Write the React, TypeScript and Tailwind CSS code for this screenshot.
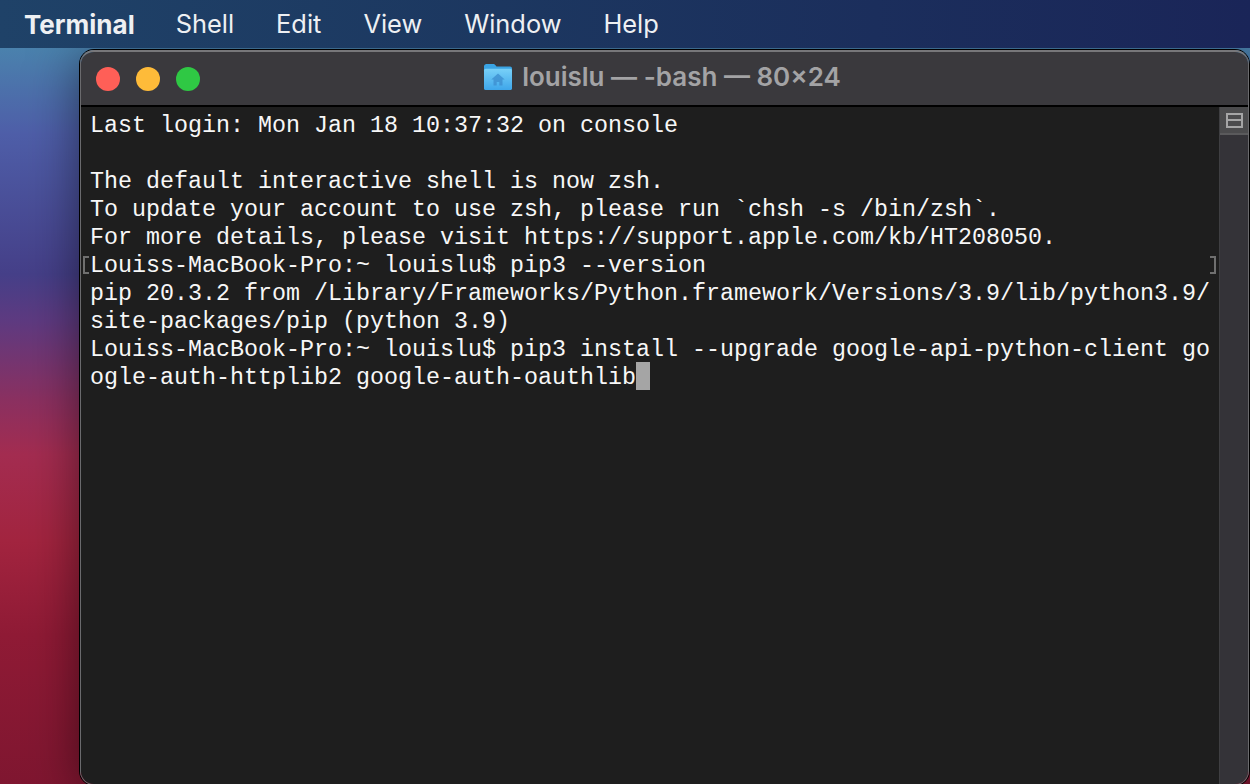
const lines = [
  "Last login: Mon Jan 18 10:37:32 on console",
  "\u00a0",
  "The default interactive shell is now zsh.",
  "To update your account to use zsh, please run `chsh -s /bin/zsh`.",
  "For more details, please visit https://support.apple.com/kb/HT208050.",
  "Louiss-MacBook-Pro:~ louislu$ pip3 --version",
  "pip 20.3.2 from /Library/Frameworks/Python.framework/Versions/3.9/lib/python3.9/",
  "site-packages/pip (python 3.9)",
  "Louiss-MacBook-Pro:~ louislu$ pip3 install --upgrade google-api-python-client go",
];

const menus = ["Shell", "Edit", "View", "Window", "Help"];

function FolderIcon() {
  return (
    <svg width="30" height="28" viewBox="0 0 30 28" className="shrink-0">
      <defs>
        <linearGradient id="folder" x1="0" y1="0" x2="0" y2="1">
          <stop offset="0" stopColor="#78d0f8" />
          <stop offset="1" stopColor="#3ea6ea" />
        </linearGradient>
      </defs>
      <path d="M1 3.5C1 2 2 1 3.5 1h6.5c1.2 0 1.8.4 2.5 1.2l1 1.3H27c1.2 0 2 .8 2 2V25c0 1.2-.8 2-2 2H3c-1.2 0-2-.8-2-2Z" fill="#3aa4e4" />
      <path d="M1 7.5c0-1 .8-1.7 1.7-1.7h24.6c.9 0 1.7.7 1.7 1.7V25c0 1.2-.8 2-2 2H3c-1.2 0-2-.8-2-2Z" fill="url(#folder)" />
      <path d="M15 10.5 8.3 16.5h2.2v6h3.2v-3.6h2.6v3.6h3.2v-6h2.2Z" fill="#3d8fd0" fillOpacity="0.8" />
    </svg>
  );
}

export default function App() {
  return (
    <div className="relative h-[784px] w-[1250px] overflow-hidden flex flex-col bg-[linear-gradient(180deg,#4a82ad_6%,#4e5ea8_17%,#453f88_35%,#5e3a80_41%,#8a3060_51%,#a32c50_58%,#a2243f_69%,#8f1a35_81%,#7f1630_100%)]">
      <div className="relative z-10 h-[48px] shrink-0 flex items-center pl-[24px] bg-[linear-gradient(90deg,#1f4268_0%,#1c3760_40%,#1a2558_100%)] text-[#eef0f3] text-[25.4px] font-['Inter','Liberation_Sans',sans-serif]">
        <span className="font-bold text-[26px] mr-[41px]">Terminal</span>
        {menus.map((m) => (
          <span key={m} className="mr-[42px]">{m}</span>
        ))}
      </div>
      <div className="flex-1 min-h-0 ml-[80px] mr-px mt-[2px] mb-[-1px] flex flex-col rounded-t-[14px] rounded-b-[14px] overflow-hidden border border-[#6a6a6d] border-t-2 border-t-[#77777a] shadow-[0_6px_50px_rgba(0,0,0,0.5),0_0_0_1px_#000]">
        <div className="h-[55px] shrink-0 relative flex items-center justify-center bg-[#3a393d] border-b-2 border-b-black">
          <div className="absolute left-[15px] top-[15px] flex gap-[16px]">
            <span className="w-[24px] h-[24px] rounded-full bg-[#ff5f57]" />
            <span className="w-[24px] h-[24px] rounded-full bg-[#febb39]" />
            <span className="w-[24px] h-[24px] rounded-full bg-[#2fc844]" />
          </div>
          <div className="flex items-center gap-[9px] ml-[-5px] mt-[-4px] text-[#a3a3a5] text-[26px] font-semibold font-['Inter','Liberation_Sans',sans-serif]">
            <FolderIcon />
            <span>louislu — -bash — 80×24</span>
          </div>
        </div>
        <div className="flex-1 min-h-0 flex">
          <div className="relative flex-1 min-w-0 bg-[#1e1e1e] pt-[5px] pl-[9px] text-[#f7f7f7] text-[23.33px] leading-[28px] font-['Liberation_Mono',monospace] whitespace-pre">
            {lines.map((l, i) => (
              <div key={i} className="h-[28px]">{l}</div>
            ))}
            <div className="h-[28px] flex">
              <span>ogle-auth-httplib2 google-auth-oauthlib</span>
              <span className="w-[14px] h-[28px] mt-[-2px] bg-[#a5a5a5]" />
            </div>
            <span className="absolute left-[2px] top-[149px] w-[6px] h-[18px] border-l-2 border-y-2 border-[#6f6f6f]" />
            <span className="absolute right-[3px] top-[149px] w-[6px] h-[18px] border-r-2 border-y-2 border-[#6f6f6f]" />
          </div>
          <div className="w-[29px] shrink-0 bg-[#343338] border-l border-l-[#3f3f42]">
            <div className="h-[28px] bg-[#4b4b4d] border-b-2 border-b-[#5a5a5c] flex items-center justify-center">
              <span className="w-[17px] h-[15px] border-2 border-[#a5a5a6] flex flex-col justify-center">
                <span className="h-[2px] bg-[#a5a5a6]" />
              </span>
            </div>
          </div>
        </div>
      </div>
    </div>
  );
}
